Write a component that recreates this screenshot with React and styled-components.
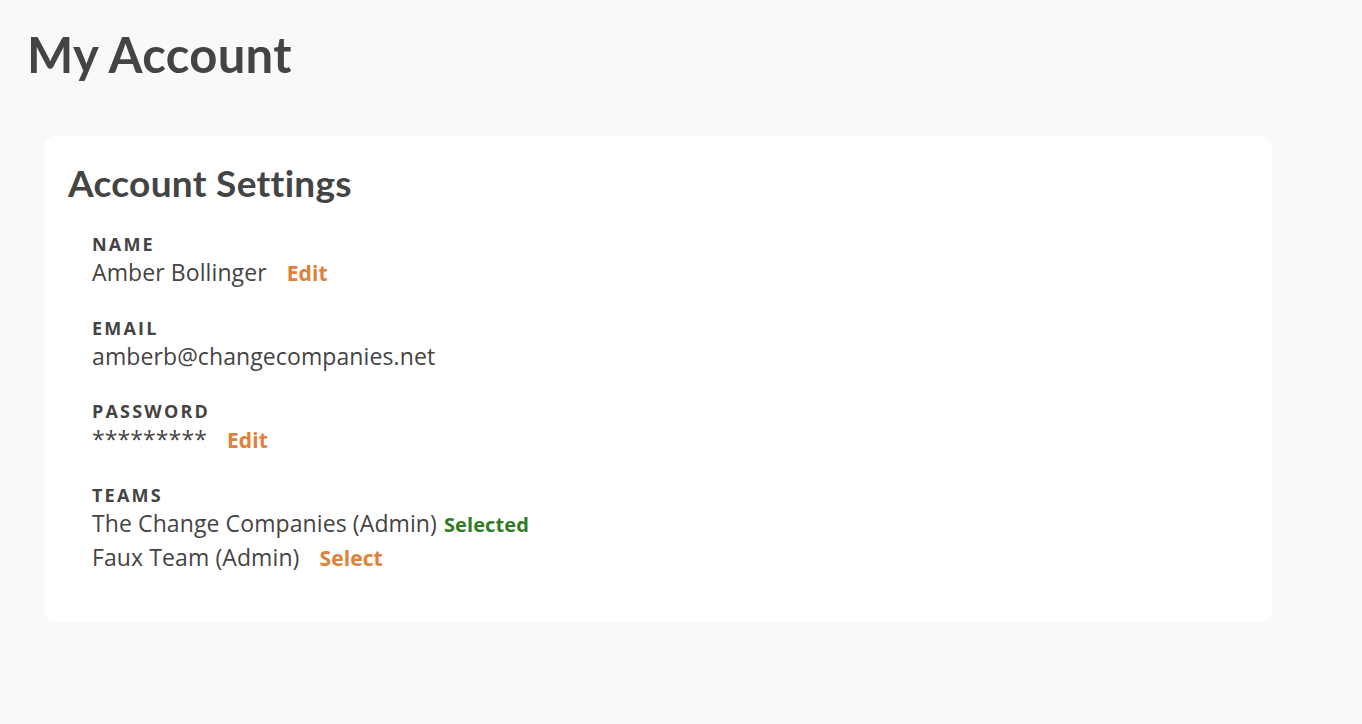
import React from "react";
import styled, { createGlobalStyle } from "styled-components";

const GlobalStyle = createGlobalStyle`
  html, body {
    margin: 0;
    padding: 0;
    background: #f9f9f9;
    font-family: "Open Sans", "Noto Sans", sans-serif;
    color: #444444;
  }
`;

const fields = [
  { label: "Name", value: "Amber Bollinger", action: "Edit" },
  { label: "Email", value: "amberb@changecompanies.net" },
  { label: "Password", value: "*********", action: "Edit" },
];

const teams = [
  { name: "The Change Companies (Admin)", selected: true },
  { name: "Faux Team (Admin)", selected: false },
];

export default function App() {
  return (
    <Page>
      <GlobalStyle />
      <PageTitle>My Account</PageTitle>
      <Card>
        <CardTitle>Account Settings</CardTitle>
        <Fields>
          {fields.map((f) => (
            <Field key={f.label}>
              <Label>{f.label}</Label>
              <Value>
                {f.action ? (
                  <>
                    <span>{f.value}</span>
                    <Action>{f.action}</Action>
                  </>
                ) : (
                  f.value
                )}
              </Value>
            </Field>
          ))}
          <Field>
            <Label>Teams</Label>
            <TeamList>
              {teams.map((t) => (
                <Value key={t.name}>
                  <span>{t.name}</span>
                  {t.selected ? <Selected>Selected</Selected> : <Action>Select</Action>}
                </Value>
              ))}
            </TeamList>
          </Field>
        </Fields>
      </Card>
    </Page>
  );
}

const Page = styled.main`
  padding: 22px 90px 0 27px;
  min-height: 724px;
  box-sizing: border-box;
`;

const PageTitle = styled.h1`
  margin: 0;
  font-family: Lato, "Open Sans", sans-serif;
  font-size: 49px;
  font-weight: 700;
  line-height: 64px;
  letter-spacing: 0.3px;
`;

const Card = styled.section`
  margin: 50px 0 0 17px;
  background: #ffffff;
  border-radius: 12px;
  padding: 22px 24px 48px;
  height: 486px;
  box-sizing: border-box;
`;

const CardTitle = styled.h2`
  margin: 0;
  font-family: Lato, "Open Sans", sans-serif;
  font-size: 37px;
  font-weight: 700;
  line-height: 50px;
  letter-spacing: 0.3px;
`;

const Fields = styled.div`
  display: flex;
  flex-direction: column;
  gap: 26px;
  margin-top: 24px;
  padding-left: 24px;
`;

const Field = styled.div`
  display: flex;
  flex-direction: column;
`;

const Label = styled.div`
  font-size: 18px;
  font-weight: 700;
  text-transform: uppercase;
  letter-spacing: 2.2px;
  line-height: 24px;
`;

const Value = styled.div`
  display: flex;
  align-items: baseline;
  font-size: 23px;
  line-height: 33px;
  letter-spacing: 0.1px;
`;

const Action = styled.a`
  margin-left: 20px;
  font-size: 21px;
  font-weight: 700;
  color: #e0813a;
  cursor: pointer;
`;

const Selected = styled.span`
  margin-left: 7px;
  font-size: 20px;
  font-weight: 700;
  color: #2f7d1e;
`;

const TeamList = styled.div`
  display: flex;
  flex-direction: column;
`;
